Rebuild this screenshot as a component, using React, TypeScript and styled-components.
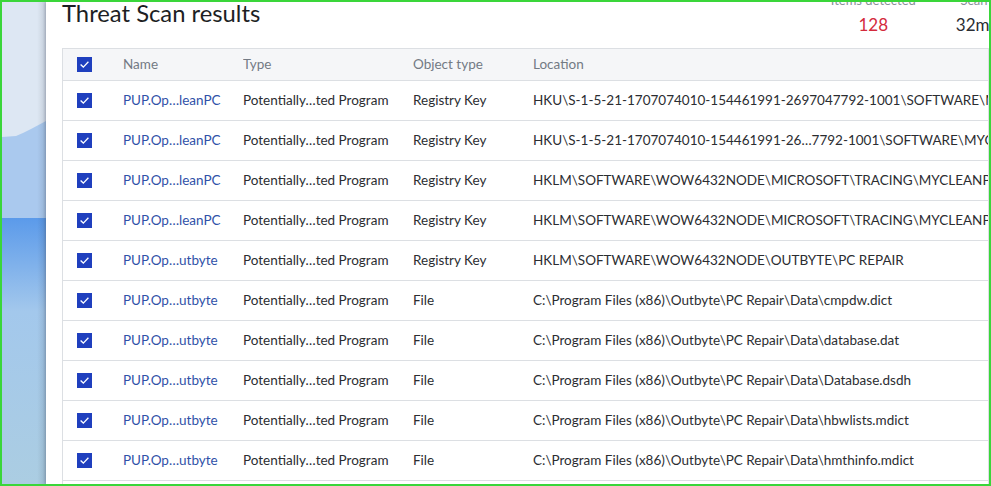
import styled, { createGlobalStyle } from "styled-components";

const GlobalStyle = createGlobalStyle`
  html, body {
    margin: 0;
    padding: 0;
    background: #fff;
  }
  body {
    font-family: Lato, "Open Sans", sans-serif;
  }
`;

const Frame = styled.div`
  width: 991px;
  height: 486px;
  box-sizing: border-box;
  border: 2px solid #3ad63a;
  display: flex;
  overflow: hidden;
`;

const Desktop = styled.div`
  width: 44px;
  flex: none;
  display: flex;
`;

const Window = styled.main`
  flex: 1;
  min-width: 0;
  background: #fff;
  box-shadow: -1px 0 3px rgba(60, 70, 90, 0.35);
  padding-left: 16px;
  overflow: hidden;
  display: flex;
  flex-direction: column;
`;

const TopBar = styled.header`
  height: 46px;
  flex: none;
  display: flex;
  align-items: flex-start;
  justify-content: space-between;
`;

const Title = styled.h1`
  margin: 0;
  font-size: 23.8px;
  font-weight: 400;
  line-height: 1;
  color: #1d1f24;
`;

const Stats = styled.div`
  display: flex;
  gap: 40px;
  margin-top: -10px;
  margin-right: -32px;
`;

const Stat = styled.div`
  display: flex;
  flex-direction: column;
  align-items: center;
  gap: 6px;
`;

const StatLabel = styled.span`
  font-size: 13px;
  color: #8a9099;
`;

const StatValue = styled.span<{ $alert?: boolean }>`
  font-size: 17px;
  color: ${(p) => (p.$alert ? "#d42a3c" : "#2a2d33")};
`;

const Table = styled.section`
  border: 1px solid #dcdfe3;
  border-bottom: none;
`;

const Row = styled.div<{ $head?: boolean }>`
  display: grid;
  grid-template-columns: 60px 120px 170px 120px 1fr;
  height: ${(p) => (p.$head ? 31 : 39)}px;
  align-items: center;
  background: ${(p) => (p.$head ? "#f5f6f8" : "#fff")};
  border-bottom: 1px solid #dcdfe3;
  font-size: 13.5px;
  color: ${(p) => (p.$head ? "#737a84" : "#2b2d31")};
`;

const Cell = styled.div<{ $link?: boolean }>`
  white-space: nowrap;
  overflow: hidden;
  padding-bottom: 1px;
  color: ${(p) => (p.$link ? "#2f51a8" : "inherit")};
`;

const CheckCell = styled.div`
  padding-left: 14px;
  display: flex;
`;

const Box = styled.span`
  width: 15px;
  height: 15px;
  background: #1f3fbe;
  display: flex;
  align-items: center;
  justify-content: center;
`;

const Check = () => (
  <Box>
    <svg width="15" height="15" viewBox="0 0 15 15">
      <path d="M3.6 7.6 L6.3 10.1 L11.4 4.8" fill="none" stroke="#fff" strokeWidth="1.3" />
    </svg>
  </Box>
);

const Wallpaper = () => (
  <svg width="44" height="482" viewBox="0 0 44 482">
    <defs>
      <linearGradient id="low" x1="0" y1="0" x2="0" y2="1">
        <stop offset="0" stopColor="#5b9aea" />
        <stop offset="0.35" stopColor="#a3c8ec" />
        <stop offset="1" stopColor="#abcde2" />
      </linearGradient>
      <linearGradient id="edge" x1="0" y1="0" x2="1" y2="0">
        <stop offset="0.8" stopColor="#000" stopOpacity="0" />
        <stop offset="1" stopColor="#2a3550" stopOpacity="0.12" />
      </linearGradient>
    </defs>
    <rect x="0" y="0" width="44" height="482" fill="#dde7f3" />
    <path d="M0 135 L14 134 C24 130 34 124 44 119 L44 216 L0 216 Z" fill="#aac9ee" />
    <rect x="0" y="216" width="44" height="266" fill="url(#low)" />
    <rect x="0" y="0" width="44" height="482" fill="url(#edge)" />
  </svg>
);

type Item = { name: string; kind: string; location: string };

const items: Item[] = [
  {
    name: "PUP.Op…leanPC",
    kind: "Registry Key",
    location: String.raw`HKU\S-1-5-21-1707074010-154461991-2697047792-1001\SOFTWARE\MYCLEANPC`,
  },
  {
    name: "PUP.Op…leanPC",
    kind: "Registry Key",
    location: String.raw`HKU\S-1-5-21-1707074010-154461991-26…7792-1001\SOFTWARE\MYCLEANPC`,
  },
  {
    name: "PUP.Op…leanPC",
    kind: "Registry Key",
    location: String.raw`HKLM\SOFTWARE\WOW6432NODE\MICROSOFT\TRACING\MYCLEANPC_RASAPI32`,
  },
  {
    name: "PUP.Op…leanPC",
    kind: "Registry Key",
    location: String.raw`HKLM\SOFTWARE\WOW6432NODE\MICROSOFT\TRACING\MYCLEANPC_RASMANCS`,
  },
  {
    name: "PUP.Op…utbyte",
    kind: "Registry Key",
    location: String.raw`HKLM\SOFTWARE\WOW6432NODE\OUTBYTE\PC REPAIR`,
  },
  { name: "PUP.Op…utbyte", kind: "File", location: String.raw`C:\Program Files (x86)\Outbyte\PC Repair\Data\cmpdw.dict` },
  { name: "PUP.Op…utbyte", kind: "File", location: String.raw`C:\Program Files (x86)\Outbyte\PC Repair\Data\database.dat` },
  { name: "PUP.Op…utbyte", kind: "File", location: String.raw`C:\Program Files (x86)\Outbyte\PC Repair\Data\Database.dsdh` },
  { name: "PUP.Op…utbyte", kind: "File", location: String.raw`C:\Program Files (x86)\Outbyte\PC Repair\Data\hbwlists.mdict` },
  { name: "PUP.Op…utbyte", kind: "File", location: String.raw`C:\Program Files (x86)\Outbyte\PC Repair\Data\hmthinfo.mdict` },
  { name: "PUP.Op…utbyte", kind: "File", location: String.raw`C:\Program Files (x86)\Outbyte\PC Repair\Data\settings.dict` },
];

export default function App() {
  return (
    <>
      <GlobalStyle />
      <Frame>
        <Desktop>
          <Wallpaper />
        </Desktop>
        <Window>
          <TopBar>
            <Title>Threat Scan results</Title>
            <Stats>
              <Stat>
                <StatLabel>Items detected</StatLabel>
                <StatValue $alert>128</StatValue>
              </Stat>
              <Stat>
                <StatLabel>Scan time</StatLabel>
                <StatValue>32m 15s</StatValue>
              </Stat>
            </Stats>
          </TopBar>
          <Table>
            <Row $head>
              <CheckCell>
                <Check />
              </CheckCell>
              <Cell>Name</Cell>
              <Cell>Type</Cell>
              <Cell>Object type</Cell>
              <Cell>Location</Cell>
            </Row>
            {items.map((it, i) => (
              <Row key={i}>
                <CheckCell>
                  <Check />
                </CheckCell>
                <Cell $link>{it.name}</Cell>
                <Cell>Potentially…ted Program</Cell>
                <Cell>{it.kind}</Cell>
                <Cell>{it.location}</Cell>
              </Row>
            ))}
          </Table>
        </Window>
      </Frame>
    </>
  );
}
